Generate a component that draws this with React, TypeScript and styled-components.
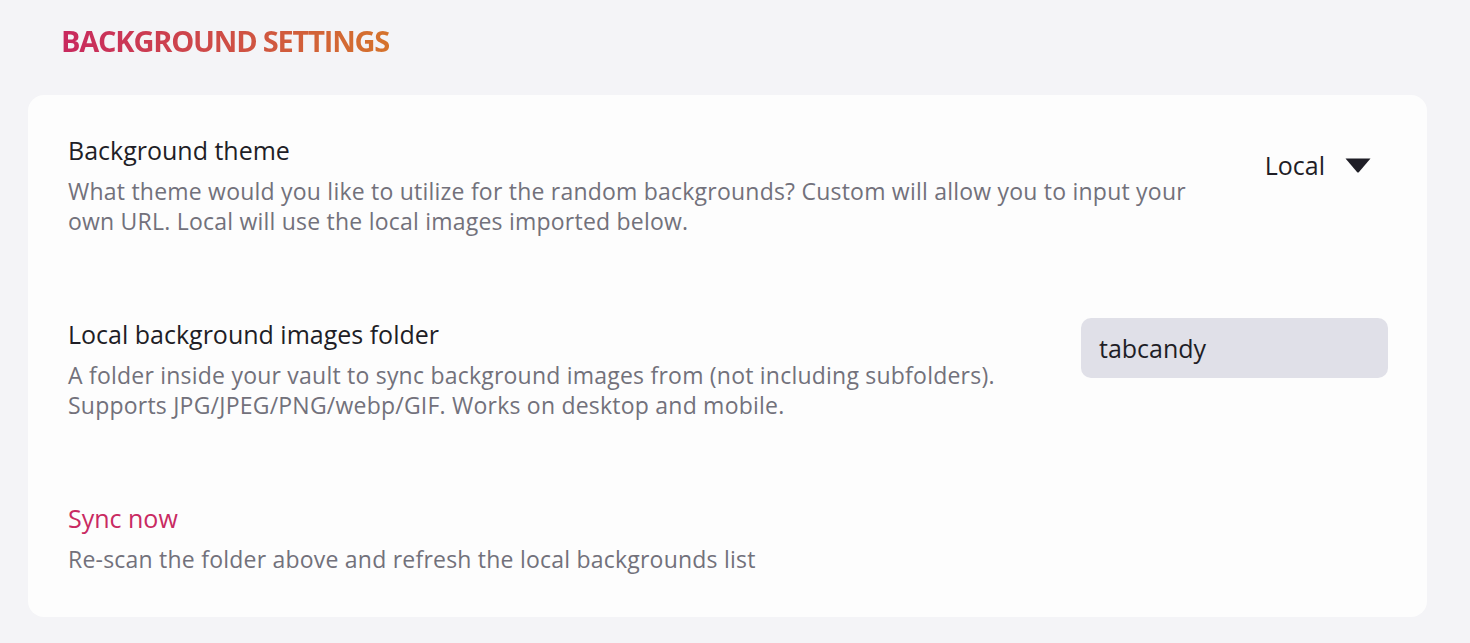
import React from "react";
import styled, { createGlobalStyle } from "styled-components";

const Global = createGlobalStyle`
  html, body { margin: 0; padding: 0; background: #f4f4f7; }
  body { font-family: "Open Sans", "Noto Sans", sans-serif; -webkit-font-smoothing: antialiased; }
  * { box-sizing: border-box; }
`;

const Page = styled.div`
  padding: 21px 43px 26px 28px;
`;

const Heading = styled.h2`
  margin: 0 0 34px 33px;
  font-size: 29px;
  line-height: 40px;
  font-weight: 700;
  letter-spacing: -1.2px;
  display: inline-block;
  background: linear-gradient(90deg, #c8285f 0%, #d5732c 100%);
  -webkit-background-clip: text;
  background-clip: text;
  color: transparent;
`;

const Card = styled.div`
  background: #fdfdfd;
  border-radius: 16px;
`;

const Row = styled.div`
  display: flex;
  align-items: flex-start;
  justify-content: space-between;
  gap: 40px;
  padding: 39px 39px 43px 40px;
`;

const Info = styled.div<{ $max: number }>`
  max-width: ${(p) => p.$max}px;
  flex: 1 1 auto;
`;

const Title = styled.div<{ $accent?: boolean }>`
  font-size: 25px;
  line-height: 32px;
  color: ${(p) => (p.$accent ? "#c92a62" : "#1f1e26")};
`;

const Desc = styled.div`
  margin-top: 10px;
  font-size: 23px;
  letter-spacing: 0.22px;
  line-height: 30px;
  color: #72717b;
`;

const Dropdown = styled.div`
  height: 60px;
  margin-top: 1px;
  display: flex;
  align-items: center;
  gap: 20px;
  padding-right: 17px;
  font-size: 25px;
  color: #1f1e26;
  flex-shrink: 0;
`;

const Input = styled.div`
  width: 307px;
  height: 60px;
  flex-shrink: 0;
  background: #e0e0e8;
  border-radius: 10px;
  padding: 0 18px;
  display: flex;
  align-items: center;
  font-size: 25px;
  color: #1f1e26;
`;

export default function App() {
  return (
    <>
      <Global />
      <Page>
        <Heading>BACKGROUND SETTINGS</Heading>
        <Card>
          <Row>
            <Info $max={1135}>
              <Title>Background theme</Title>
              <Desc>
                What theme would you like to utilize for the random backgrounds? Custom will allow you to input your own
                URL. Local will use the local images imported below.
              </Desc>
            </Info>
            <Dropdown>
              Local
              <svg width="26" height="15" viewBox="0 0 26 15">
                <path d="M0.5 0.5 H25.5 L14 14 Q13 15 12 14 Z" fill="#1f1e26" />
              </svg>
            </Dropdown>
          </Row>
          <Row>
            <Info $max={960}>
              <Title>Local background images folder</Title>
              <Desc>
                A folder inside your vault to sync background images from (not including subfolders). Supports
                JPG/JPEG/PNG/webp/GIF. Works on desktop and mobile.
              </Desc>
            </Info>
            <Input>tabcandy</Input>
          </Row>
          <Row>
            <Info $max={1135}>
              <Title $accent>Sync now</Title>
              <Desc>Re-scan the folder above and refresh the local backgrounds list</Desc>
            </Info>
          </Row>
        </Card>
      </Page>
    </>
  );
}
